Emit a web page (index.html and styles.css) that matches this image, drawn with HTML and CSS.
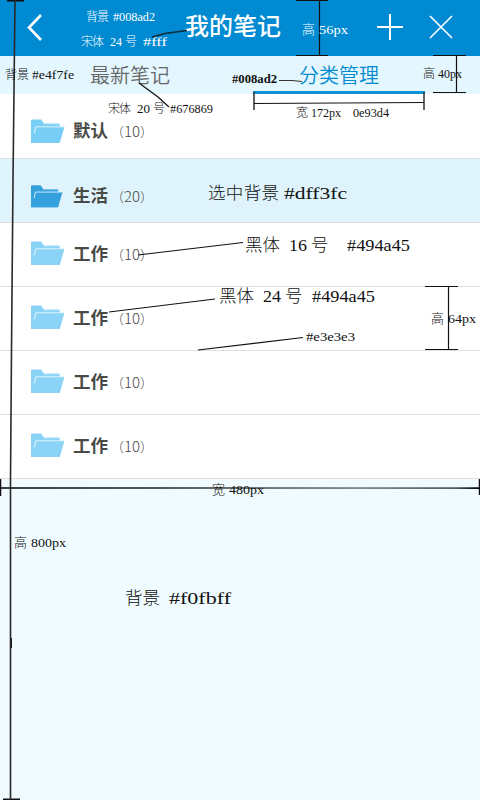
FILE: index.html
```html
<!DOCTYPE html>
<html lang="zh-CN">
<head>
<meta charset="utf-8">
<title>我的笔记</title>
<link rel="stylesheet" href="styles.css">
</head>
<body>
<svg class="defs" aria-hidden="true">
  <symbol id="folder" viewBox="0 0 34 25">
    <path d="M0 1.5Q0 .5 1 .5H10.2L13 4.4H28Q29 4.4 29 5.4V23.5L27 24H0Z" fill="currentColor"/>
    <path d="M5 7.8H33.5L29 23Q28.5 24 27.5 24H.5V22L3.5 9Z" fill="currentColor"/>
    <path d="M3.4 14.5L4.6 7.8H33" fill="none" stroke="#e4f6ff" stroke-width=".9"/>
    <path d="M12.5 5H28.5V7" fill="none" stroke="#d5effc" stroke-width=".5"/>
  </symbol>
</svg>
<div class="app">
  <header class="header">
    <svg class="back" viewBox="0 0 18 30"><path d="M15 2L3 14.5L15 27"/></svg>
    <h1 class="title">我的笔记</h1>
    <svg class="action add" viewBox="0 0 26 26"><path d="M13 0V26M0 13H26"/></svg>
    <svg class="action close" viewBox="0 0 26 26"><path d="M2 2L24 24M24 2L2 24"/></svg>
  </header>
  <nav class="tabs">
    <a class="tab">最新笔记</a>
    <a class="tab active">分类管理</a>
  </nav>
  <main class="list">
    <div class="row first"><svg class="folder"><use href="#folder"/></svg><b class="name">默认</b><span class="count"><i>（</i>10<i>）</i></span></div>
    <div class="row selected"><svg class="folder"><use href="#folder"/></svg><b class="name">生活</b><span class="count"><i>（</i>20<i>）</i></span></div>
    <div class="row"><svg class="folder"><use href="#folder"/></svg><b class="name">工作</b><span class="count"><i>（</i>10<i>）</i></span></div>
    <div class="row"><svg class="folder"><use href="#folder"/></svg><b class="name">工作</b><span class="count"><i>（</i>10<i>）</i></span></div>
    <div class="row"><svg class="folder"><use href="#folder"/></svg><b class="name">工作</b><span class="count"><i>（</i>10<i>）</i></span></div>
    <div class="row"><svg class="folder"><use href="#folder"/></svg><b class="name">工作</b><span class="count"><i>（</i>10<i>）</i></span></div>
  </main>

  <svg class="notes" viewBox="0 0 480 800">
    <defs>
      <linearGradient id="fade" gradientUnits="userSpaceOnUse" x1="0" y1="0" x2="480" y2="0">
        <stop offset="0" stop-color="#000"/><stop offset=".35" stop-color="#222"/><stop offset=".75" stop-color="#777"/><stop offset=".95" stop-color="#555"/><stop offset="1" stop-color="#000"/>
      </linearGradient>
    </defs>
    <g class="lines">
      <path d="M7 .5H24M3 799.5H20M11 638V648" stroke-width="2"/>
      <path d="M15 0L13 180L11.5 350L10.5 480V800" stroke="#292929" stroke-width="1.6"/>
      <path d="M152 37L165 33.5L187 30.5" stroke="#152b38" stroke-width="1.6"/>
      <path d="M296 .5H328M296 55.5H328M319.5 0V56"/>
      <path d="M433 55.5H466M433 92.5H466M456.5 56V92"/>
      <path d="M279 80.5H292L302 81.5" stroke="#333"/>
      <path d="M139 83L158 97L169 107"/>
      <path d="M254 92V110M424 92V110" stroke="#333" stroke-width="1.5"/>
      <path d="M254 103.5L424 102.5"/>
      <path d="M138 255L243 242.5M109 312L215 299M198 350L303 337.5"/>
      <path d="M425 286.5H458M425 349.5H458M448.5 287V349" stroke-width="1.2"/>
      <path d="M0 488L480 488.1" stroke="url(#fade)" stroke-width="1.6"/>
      <path d="M.5 479V496M479.5 479V495" stroke-width="1.5"/>
    </g>
    <g class="small white">
      <text x="86" y="21" textLength="23">背景</text>
      <text x="113" y="21" textLength="42" lengthAdjust="spacingAndGlyphs">#008ad2</text>
      <text x="81" y="46" textLength="23">宋体</text>
      <text x="110" y="46" textLength="12" lengthAdjust="spacingAndGlyphs">24</text>
      <text x="125" y="46">号</text>
      <text x="143" y="46" textLength="24" lengthAdjust="spacingAndGlyphs">#fff</text>
      <text class="measure" x="302" y="34">高</text>
      <text class="measure" x="319" y="34" textLength="29" lengthAdjust="spacingAndGlyphs">56px</text>
    </g>
    <g class="small">
      <text x="5" y="79" textLength="24">背景</text>
      <text x="32" y="79" textLength="42" lengthAdjust="spacingAndGlyphs">#e4f7fe</text>
      <text x="108" y="113" textLength="23">宋体</text>
      <text x="137" y="113" textLength="13" lengthAdjust="spacingAndGlyphs">20</text>
      <text x="153" y="113">号</text>
      <text x="170" y="113" textLength="43" lengthAdjust="spacingAndGlyphs">#676869</text>
      <text class="strong" x="232" y="83" textLength="45" lengthAdjust="spacingAndGlyphs">#008ad2</text>
      <text x="423" y="78">高</text>
      <text x="438" y="78" textLength="24" lengthAdjust="spacingAndGlyphs">40px</text>
      <text x="296" y="117">宽</text>
      <text x="311" y="117" textLength="30" lengthAdjust="spacingAndGlyphs">172px</text>
      <text x="353" y="117" textLength="36" lengthAdjust="spacingAndGlyphs">0e93d4</text>
      <text class="measure" x="306" y="341" textLength="49" lengthAdjust="spacingAndGlyphs">#e3e3e3</text>
      <text class="measure" x="431" y="323">高</text>
      <text class="measure" x="448" y="323" textLength="28" lengthAdjust="spacingAndGlyphs">64px</text>
      <text class="measure" x="212" y="494">宽</text>
      <text class="measure" x="229" y="494" textLength="35" lengthAdjust="spacingAndGlyphs">480px</text>
      <text class="measure" x="14" y="547">高</text>
      <text class="measure" x="31" y="547" textLength="35" lengthAdjust="spacingAndGlyphs">800px</text>
    </g>
    <g class="large">
      <text x="208" y="199" textLength="71">选中背景</text>
      <text x="284" y="199" textLength="63" lengthAdjust="spacingAndGlyphs">#dff3fc</text>
      <text x="245" y="251" textLength="35">黑体</text>
      <text x="289" y="251" textLength="18" lengthAdjust="spacingAndGlyphs">16</text>
      <text x="311" y="251">号</text>
      <text x="347" y="251" textLength="63" lengthAdjust="spacingAndGlyphs">#494a45</text>
      <text x="219" y="302" textLength="35">黑体</text>
      <text x="263" y="302" textLength="18" lengthAdjust="spacingAndGlyphs">24</text>
      <text x="285" y="302">号</text>
      <text x="312" y="302" textLength="63" lengthAdjust="spacingAndGlyphs">#494a45</text>
      <text x="125" y="604" textLength="35">背景</text>
      <text x="169" y="604" textLength="62" lengthAdjust="spacingAndGlyphs">#f0fbff</text>
    </g>
  </svg>
</div>
</body>
</html>
```
FILE: styles.css
```css
* { box-sizing: border-box; }
body { margin: 0; }
.defs { position: absolute; width: 0; height: 0; }
.app {
  position: relative;
  width: 480px;
  height: 800px;
  overflow: hidden;
  background: #f0fbff;
  font-family: "Liberation Sans", "Noto Sans CJK SC", sans-serif;
}
.header {
  display: flex;
  align-items: center;
  height: 56px;
  padding: 0 27px 0 26px;
  background: #008ad2;
}
.header svg { fill: none; stroke: #fff; }
.back { width: 18px; height: 30px; stroke-width: 2.6; }
.title {
  margin: 0 0 2px 141px;
  width: 98px;
  color: #fff;
  font-size: 24px;
  line-height: 32px;
  font-weight: 500;
  white-space: nowrap;
}
.action { width: 26px; height: 26px; flex: none; }
.add { margin: 0 0 2px 94px; stroke-width: 2; }
.close { margin: 0 -1px 2px auto; stroke-width: 1.6; }
.tabs {
  display: flex;
  height: 38px;
  padding-left: 44px;
  gap: 37px;
  background: #e4f7fe;
}
.tab {
  width: 172px;
  height: 38px;
  color: #676869;
  font-size: 20px;
  line-height: 40px;
  text-align: center;
  font-weight: 350;
}
.tab.active { color: #008ad2; border-bottom: 3px solid #0e93d4; }
.list { background: #fff; }
.row {
  display: flex;
  height: 64px;
  padding: 18px 0 0 31px;
  border-bottom: 1px solid #dedede;
  color: #494a45;
  line-height: 25px;
}
.row.first { height: 65px; padding-top: 25px; }
.row.selected { padding-top: 25px; background: #dff3fc; }
.folder { width: 34px; height: 25px; color: #8ad3f7; }
.first .folder { color: #79cef6; }
.selected .folder { width: 32px; color: #35a1dc; margin-right: 2px; }
.name { margin-left: 8px; width: 35px; font-size: 17.5px; line-height: 26px; white-space: nowrap; }
.first .name, .selected .name { line-height: 24px; }
.count {
  margin-left: -1px;
  font-family: "Noto Sans CJK SC", sans-serif;
  font-weight: 300;
  font-size: 15px;
  line-height: 25px;
  white-space: nowrap;
}
.first .count, .selected .count { line-height: 24px; }
.count i { display: inline-block; width: 13px; font-size: 13px; font-style: normal; }
.count i:first-child { margin-left: 4px; }
.notes { position: absolute; left: 0; top: 0; width: 480px; height: 800px; }
.lines { fill: none; stroke: #111; stroke-width: 1.2; }
.notes text { font-family: "Liberation Serif", "Noto Sans CJK SC", serif; fill: #111; font-weight: 300; }
.small text { font-size: 12px; }
.notes .measure { font-size: 13px; }
.notes .white text { fill: #fff; }
.notes .strong { font-weight: 700; }
.large text { font-size: 17.5px; }
```
